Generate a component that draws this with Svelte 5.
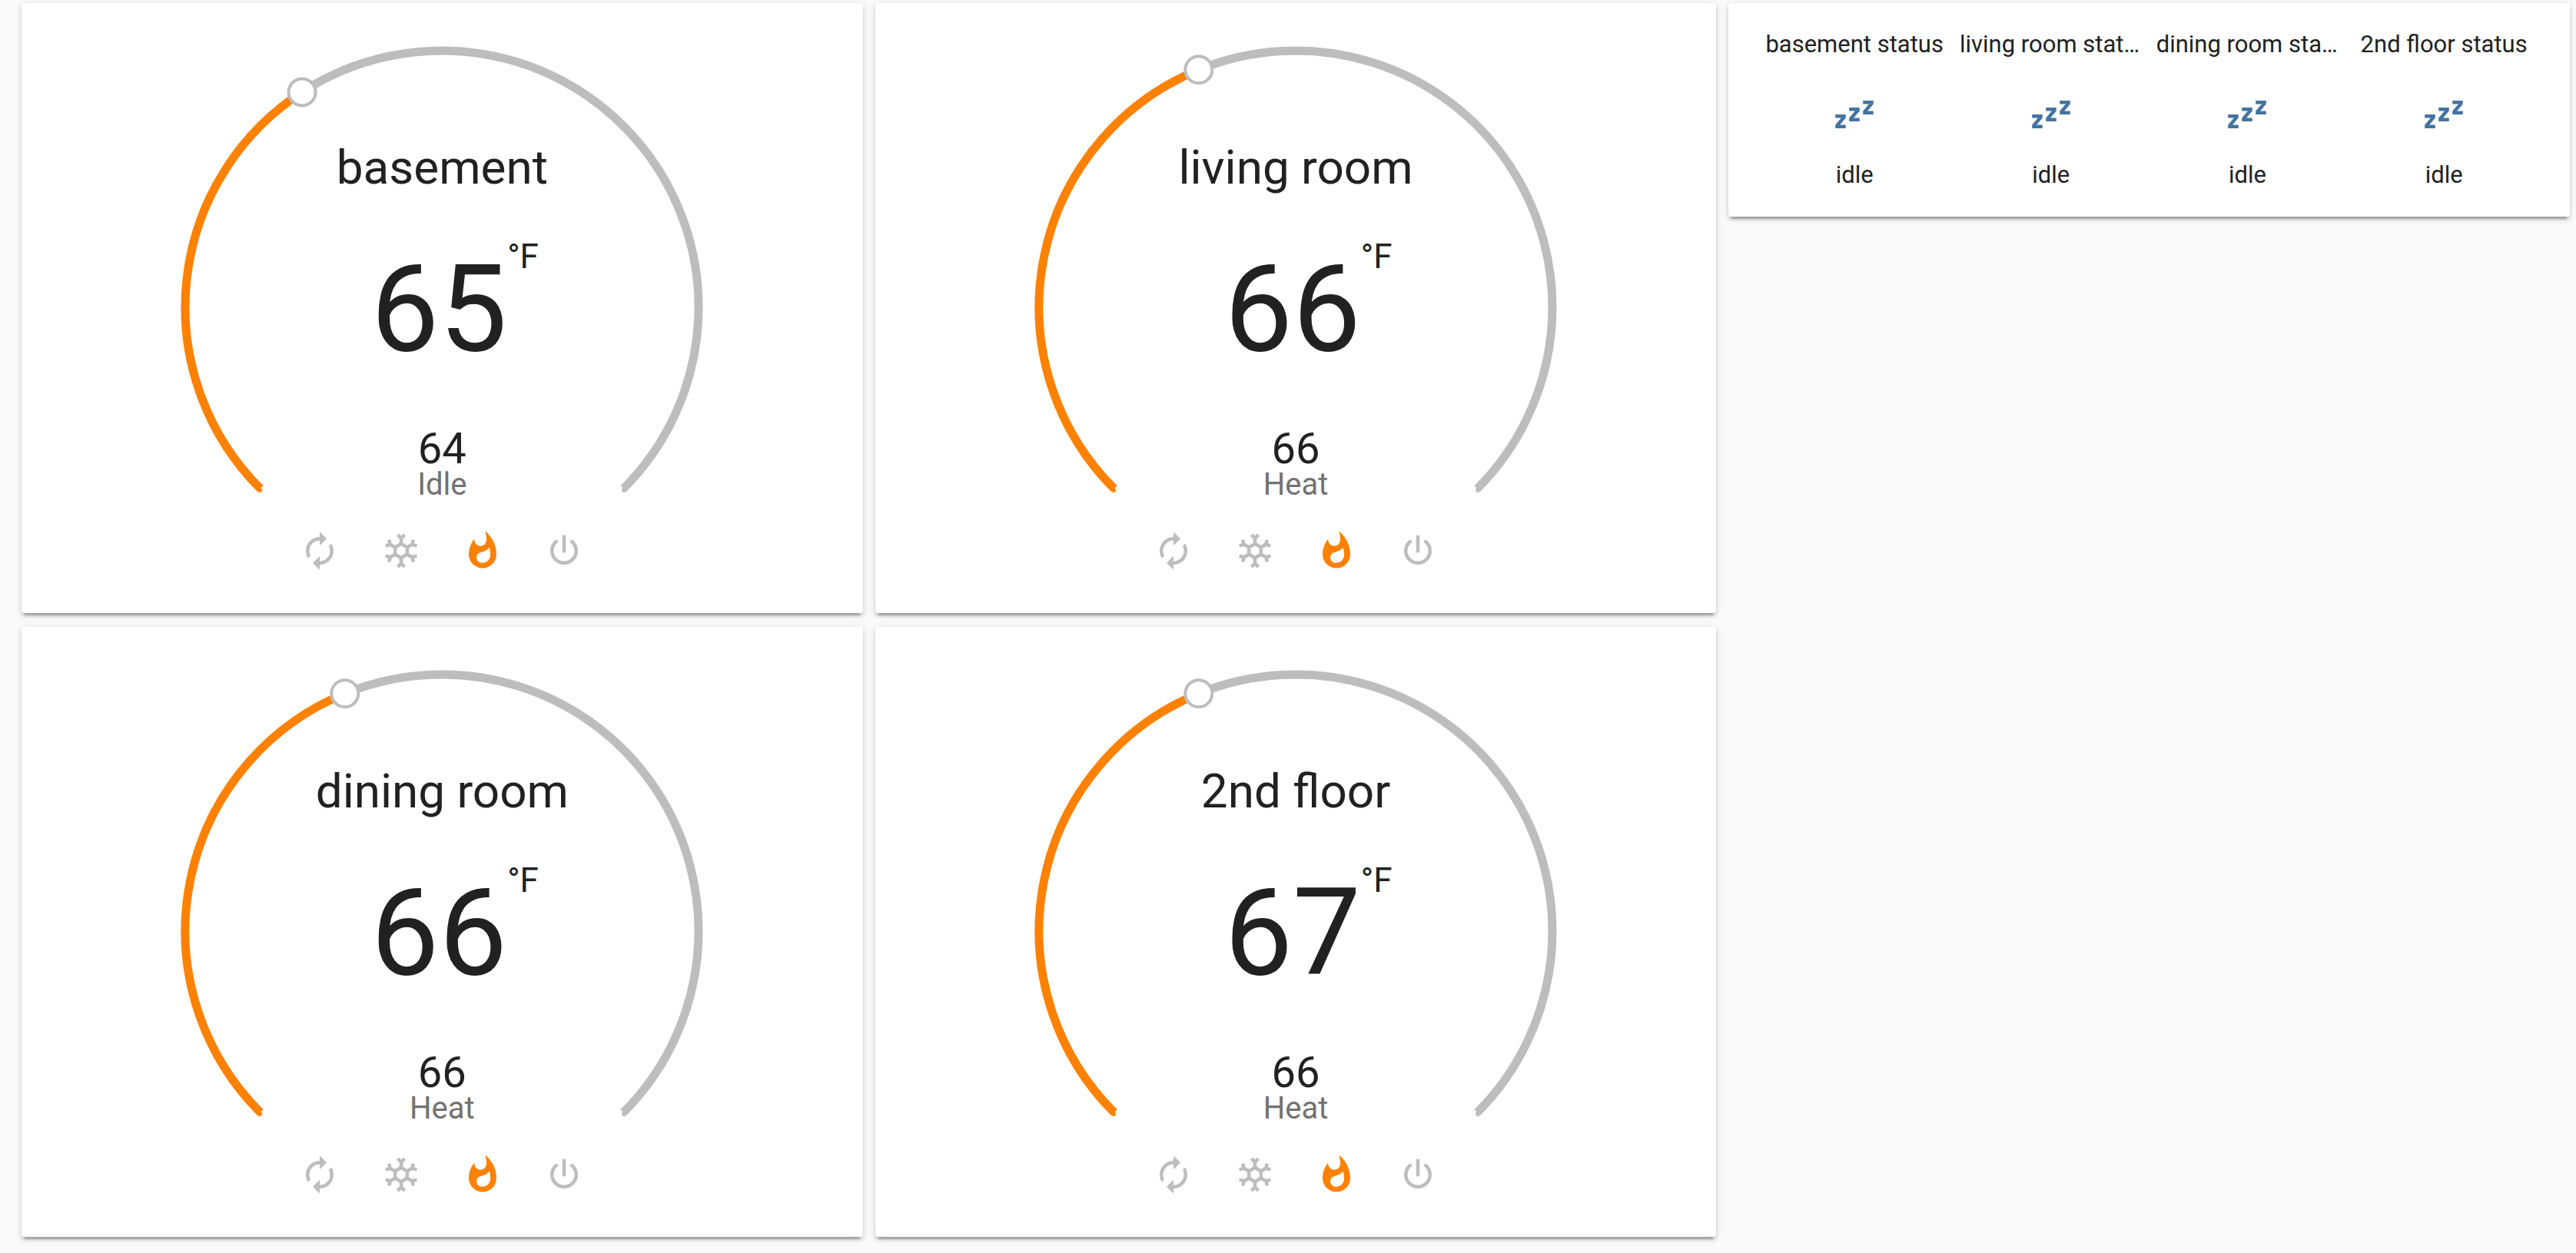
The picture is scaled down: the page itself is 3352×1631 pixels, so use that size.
<script>
  const MIN = 45;
  const MAX = 95;
  const SWEEP = 270;
  const RADIUS = 334;
  // The handle sits slightly behind the exact value on the ring.
  const HANDLE_LAG = 0.6;

  let rooms = $state([
    { name: 'basement', current: 65, target: 64, action: 'Idle', mode: 'heat' },
    { name: 'dining room', current: 66, target: 66, action: 'Heat', mode: 'heat' },
    { name: 'living room', current: 66, target: 66, action: 'Heat', mode: 'heat' },
    { name: '2nd floor', current: 67, target: 66, action: 'Heat', mode: 'heat' }
  ]);

  const columns = [[0, 1], [2, 3]];

  const statuses = [
    { name: 'basement status', state: 'idle' },
    { name: 'living room status', state: 'idle' },
    { name: 'dining room status', state: 'idle' },
    { name: '2nd floor status', state: 'idle' }
  ];

  const modes = [
    { id: 'auto', label: 'Auto', path: 'M12,6V9L16,5L12,1V4A8,8 0 0,0 4,12C4,13.57 4.46,15.03 5.24,16.26L6.7,14.8C6.25,13.97 6,13 6,12A6,6 0 0,1 12,6M18.76,7.74L17.3,9.2C17.74,10.04 18,11 18,12A6,6 0 0,1 12,18V15L8,19L12,23V20A8,8 0 0,0 20,12C20,10.43 19.54,8.97 18.76,7.74Z' },
    { id: 'cool', label: 'Cool', path: 'M20.79,13.95L18.46,14.57L16.46,13.44V10.56L18.46,9.43L20.79,10.05L21.31,8.12L19.54,7.65L20,5.88L18.07,5.36L17.45,7.69L15.45,8.82L13,7.38V5.12L14.71,3.41L13.29,2L12,3.29L10.71,2L9.29,3.41L11,5.12V7.38L8.5,8.82L6.5,7.69L5.92,5.36L4,5.88L4.47,7.65L2.7,8.12L3.22,10.05L5.55,9.43L7.55,10.56V13.45L5.55,14.58L3.22,13.96L2.7,15.89L4.47,16.36L4,18.12L5.93,18.64L6.55,16.31L8.55,15.18L11,16.62V18.88L9.29,20.59L10.71,22L12,20.71L13.29,22L14.7,20.59L13,18.88V16.62L15.5,15.17L17.5,16.3L18.12,18.63L20,18.12L19.53,16.35L21.3,15.88L20.79,13.95M9.5,10.56L12,9.11L14.5,10.56V13.44L12,14.89L9.5,13.44V10.56Z' },
    { id: 'heat', label: 'Heat', path: 'M11.71,19C9.93,19 8.5,17.59 8.5,15.86C8.5,14.24 9.53,13.1 11.3,12.74C13.07,12.38 14.9,11.53 15.92,10.16C16.31,11.45 16.5,12.81 16.5,14.2C16.5,16.84 14.36,19 11.71,19M13.5,0.67C13.5,0.67 14.24,3.32 14.24,5.47C14.24,7.53 12.89,9.2 10.83,9.2C8.76,9.2 7.2,7.53 7.2,5.47L7.23,5.1C5.21,7.5 4,10.61 4,14A8,8 0 0,0 12,22A8,8 0 0,0 20,14C20,8.6 17.41,3.8 13.5,0.67Z' },
    { id: 'off', label: 'Off', path: 'M16.56,5.44L15.11,6.89C16.84,7.94 18,9.83 18,12A6,6 0 0,1 12,18A6,6 0 0,1 6,12C6,9.83 7.16,7.94 8.88,6.88L7.44,5.44C5.36,6.88 4,9.28 4,12A8,8 0 0,0 12,20A8,8 0 0,0 20,12C20,9.28 18.64,6.88 16.56,5.44M13,3H11V13H13' }
  ];

  const sleepPath = 'M23,12H17V10L20.39,6H17V4H23V6L19.62,10H23V12M15,16H9V14L12.39,10H9V8H15V10L11.62,14H15V16M7,20H1V18L4.39,14H1V12H7V14L3.62,18H7V20Z';

  // Degrees clockwise from twelve o'clock.
  const angleOf = (value) => ((value - MIN) / (MAX - MIN)) * SWEEP - SWEEP / 2 - HANDLE_LAG;

  function point(deg) {
    const rad = (deg * Math.PI) / 180;
    return { x: RADIUS * Math.sin(rad), y: -RADIUS * Math.cos(rad) };
  }

  function arc(from, to) {
    const a = point(from);
    const b = point(to);
    const large = to - from > 180 ? 1 : 0;
    return `M${a.x} ${a.y}A${RADIUS} ${RADIUS} 0 ${large} 1 ${b.x} ${b.y}`;
  }
</script>

<main class="view">
  {#each columns as column}
    <div class="column">
      {#each column as index}
        {@const room = rooms[index]}
        {@const angle = angleOf(room.target)}
        {@const thumb = point(angle)}
        <section class="card thermostat" aria-label={room.name}>
          <div class="dial">
            <svg class="ring" viewBox="-340 -340 680 590" aria-hidden="true">
              <path class="track" d={arc(angle, 135)} />
              <circle class="track-end" cx="237" cy="238" r="3" />
              <path class="bar" d={arc(-135, angle)} />
              <circle class="bar-end" cx="-237" cy="238" r="3" />
              <circle class="thumb" cx={thumb.x} cy={thumb.y} r="17.5" />
            </svg>
            <input
              class="slider"
              type="range"
              min={MIN}
              max={MAX}
              aria-label={`${room.name} target temperature`}
              bind:value={room.target}
            />
            <div class="readout">
              <h2 class="title">{room.name}</h2>
              <div class="current">{room.current}<span class="unit">°F</span></div>
              <div class="target">{room.target}</div>
              <div class="action">{room.action}</div>
            </div>
          </div>
          <div class="modes">
            {#each modes as mode}
              <button
                class="mode"
                class:active={room.mode === mode.id}
                type="button"
                aria-label={mode.label}
                aria-pressed={room.mode === mode.id}
                onclick={() => (room.mode = mode.id)}
              >
                <svg class="icon" viewBox="0 0 24 24" aria-hidden="true"><path d={mode.path} /></svg>
              </button>
            {/each}
          </div>
        </section>
      {/each}
    </div>
  {/each}

  <div class="column">
    <section class="card glance" aria-label="Status">
      {#each statuses as item}
        <button class="entity" type="button">
          <span class="name">{item.name}</span>
          <svg class="icon sleep" viewBox="0 0 24 24" aria-hidden="true"><path d={sleepPath} /></svg>
          <span class="name">{item.state}</span>
        </button>
      {/each}
    </section>
  </div>
</main>

<style>
  :global(body) {
    background: #fafafa;
  }

  .view {
    display: grid;
    grid-template-columns: repeat(3, minmax(0, 1fr));
    gap: 16px;
    align-items: start;
    padding: 4px 8px 20px 28px;
    font-family: Roboto, sans-serif;
    color: #212121;
  }

  .column {
    display: flex;
    flex-direction: column;
    gap: 18px;
  }

  .card {
    background: #fff;
    border-radius: 4px;
    box-shadow:
      0 4px 4px rgba(0, 0, 0, 0.14),
      0 2px 11px rgba(0, 0, 0, 0.12),
      0 7px 2px -4px rgba(0, 0, 0, 0.2);
  }

  .thermostat {
    display: flex;
    flex-direction: column;
    align-items: center;
    padding: 56px 0 54px;
  }

  .dial {
    display: grid;
    width: 680px;
    max-width: 100%;
  }

  .ring,
  .slider,
  .readout {
    grid-area: 1 / 1;
  }

  .ring {
    display: block;
    width: 100%;
  }

  .track,
  .bar {
    fill: none;
    stroke-width: 11;
  }

  .track {
    stroke: #bdbdbd;
  }

  .track-end {
    fill: #bdbdbd;
  }

  .bar {
    stroke: #ff8100;
  }

  .bar-end {
    fill: #ff8100;
  }

  .thumb {
    fill: #fff;
    stroke: #bdbdbd;
    stroke-width: 4;
  }

  .slider {
    width: 100%;
    height: 100%;
    margin: 0;
    opacity: 0;
    cursor: pointer;
  }

  .readout {
    display: flex;
    flex-direction: column;
    align-items: center;
    padding-top: 122px;
    pointer-events: none;
  }

  .title {
    margin: 0 0 68px;
    font-size: 62px;
    font-weight: 400;
    line-height: 72px;
  }

  .current {
    position: relative;
    margin: 0 8px 75px 0;
    font-size: 158px;
    line-height: 160px;
  }

  .unit {
    position: absolute;
    top: -10px;
    left: 100%;
    font-size: 44px;
    line-height: 44px;
  }

  .target {
    font-size: 56px;
    line-height: 54px;
  }

  .action {
    font-size: 40px;
    line-height: 40px;
    color: #727272;
  }

  .modes {
    display: flex;
    gap: 52px;
    margin-top: 39px;
  }

  .mode {
    display: block;
    padding: 0;
    border: 0;
    background: none;
    color: #bdbdbd;
    cursor: pointer;
  }

  .mode.active {
    color: #ff8100;
  }

  .icon {
    display: block;
    width: 54px;
    height: 54px;
    fill: currentColor;
  }

  .glance {
    display: grid;
    grid-template-columns: repeat(4, minmax(0, 1fr));
    padding: 36px;
  }

  .entity {
    display: flex;
    flex-direction: column;
    align-items: center;
    padding: 0 9px;
    border: 0;
    background: none;
    color: inherit;
    font-family: inherit;
    font-size: 31px;
    line-height: 36px;
    cursor: pointer;
  }

  .name {
    max-width: 100%;
    overflow: hidden;
    text-overflow: ellipsis;
    white-space: nowrap;
  }

  .sleep {
    margin: 46px 0 34px;
    color: #44739e;
  }
</style>
